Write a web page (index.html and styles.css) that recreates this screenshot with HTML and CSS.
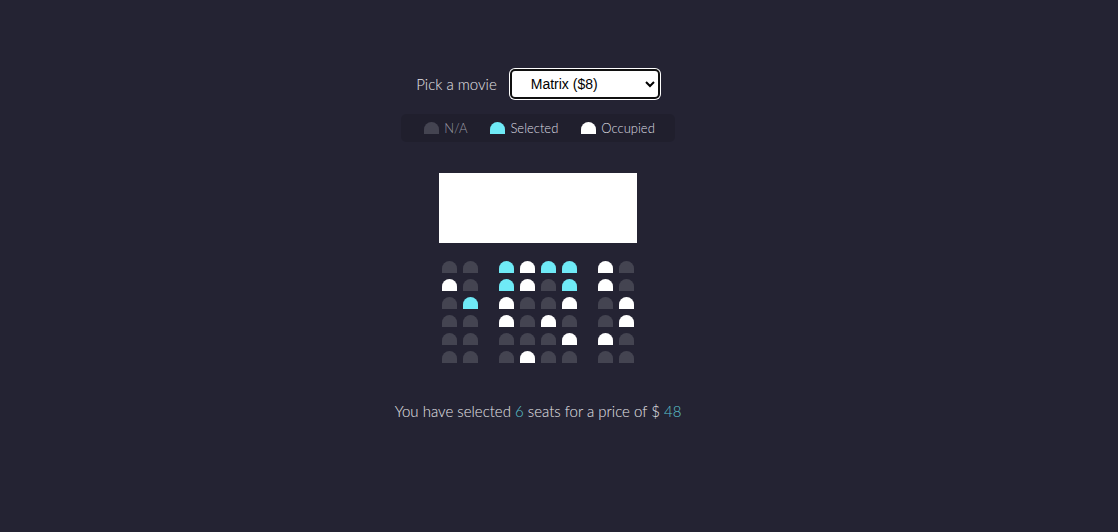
FILE: index.html
```html
<!DOCTYPE html>
<html lang="en">
<head>
<meta charset="UTF-8">
<title>Movie Seat Booking</title>
<link rel="stylesheet" href="styles.css">
</head>
<body>
  <div class="movie-container">
    <label class="movie-label" for="movie">Pick a movie</label>
    <select id="movie" class="movie-select">
      <option value="8">Matrix ($8)</option>
      <option value="10">Inception ($10)</option>
      <option value="12">Joker ($12)</option>
    </select>
  </div>

  <ul class="showcase">
    <li class="showcase-item"><div class="seat"></div><small class="showcase-na">N/A</small></li>
    <li class="showcase-item"><div class="seat selected"></div><small>Selected</small></li>
    <li class="showcase-item"><div class="seat occupied"></div><small>Occupied</small></li>
  </ul>

  <div class="container">
    <div class="screen"></div>
    <div class="row">
      <div class="seat"></div><div class="seat"></div>
      <div class="seat selected"></div><div class="seat occupied"></div><div class="seat selected"></div><div class="seat selected"></div>
      <div class="seat occupied"></div><div class="seat"></div>
    </div>
    <div class="row">
      <div class="seat occupied"></div><div class="seat"></div>
      <div class="seat selected"></div><div class="seat occupied"></div><div class="seat"></div><div class="seat selected"></div>
      <div class="seat occupied"></div><div class="seat"></div>
    </div>
    <div class="row">
      <div class="seat"></div><div class="seat selected"></div>
      <div class="seat occupied"></div><div class="seat"></div><div class="seat"></div><div class="seat occupied"></div>
      <div class="seat"></div><div class="seat occupied"></div>
    </div>
    <div class="row">
      <div class="seat"></div><div class="seat"></div>
      <div class="seat occupied"></div><div class="seat"></div><div class="seat occupied"></div><div class="seat"></div>
      <div class="seat"></div><div class="seat occupied"></div>
    </div>
    <div class="row">
      <div class="seat"></div><div class="seat"></div>
      <div class="seat"></div><div class="seat"></div><div class="seat"></div><div class="seat occupied"></div>
      <div class="seat occupied"></div><div class="seat"></div>
    </div>
    <div class="row">
      <div class="seat"></div><div class="seat"></div>
      <div class="seat"></div><div class="seat occupied"></div><div class="seat"></div><div class="seat"></div>
      <div class="seat"></div><div class="seat"></div>
    </div>
  </div>

  <p class="text">You have selected <span class="count">6</span> seats for a price of $ <span class="total">48</span></p>
</body>
</html>
```

FILE: styles.css
```css
* {
  box-sizing: border-box;
}

body {
  background-color: #242333;
  color: #fff;
  display: flex;
  flex-direction: column;
  align-items: center;
  margin: 0;
  padding: 69px 42px 0 0;
  height: 100vh;
  font-family: Lato, "Open Sans", sans-serif;
  font-weight: 300;
}

.movie-container {
  display: flex;
  align-items: center;
  height: 30px;
}

.movie-label {
  font-size: 15px;
  margin-right: 13px;
  color: #e4e4e8;
}

.movie-select {
  width: 150px;
  height: 30px;
  background-color: #fff;
  color: #000;
  border: 2px solid #101010;
  border-radius: 5px;
  box-shadow: 0 0 0 1px #fff;
  font-family: "Liberation Sans", Arial, sans-serif;
  font-size: 14px;
  padding: 0 13px 0 15px;
  outline: none;
}

.showcase {
  background: rgba(0, 0, 0, 0.1);
  padding: 5px 10px;
  border-radius: 5px;
  color: #dcdce2;
  list-style-type: none;
  display: flex;
  justify-content: space-between;
  margin: 15px 0 0;
}

.showcase-item {
  display: flex;
  align-items: center;
  justify-content: center;
  margin: 0 10px;
}

.showcase-item small {
  margin-left: 2px;
  font-size: 13px;
}

.showcase .showcase-na {
  color: #9a9aa4;
}

.container {
  margin-top: 31px;
  margin-bottom: 30px;
}

.screen {
  background-color: #fff;
  height: 70px;
  width: 100%;
  margin: 0 0 15px;
}

.row {
  display: flex;
}

.seat {
  background-color: #444451;
  height: 12px;
  width: 15px;
  margin: 3px;
  border-top-left-radius: 10px;
  border-top-right-radius: 10px;
}

.seat.selected {
  background-color: #6feaf6;
}

.seat.occupied {
  background-color: #fff;
}

.row .seat:nth-of-type(2) {
  margin-right: 18px;
}

.row .seat:nth-last-of-type(2) {
  margin-left: 18px;
}

.text {
  margin: 6px 0;
  font-size: 15px;
  color: #e4e4e8;
}

.text span {
  color: #5cc3cf;
}
```
